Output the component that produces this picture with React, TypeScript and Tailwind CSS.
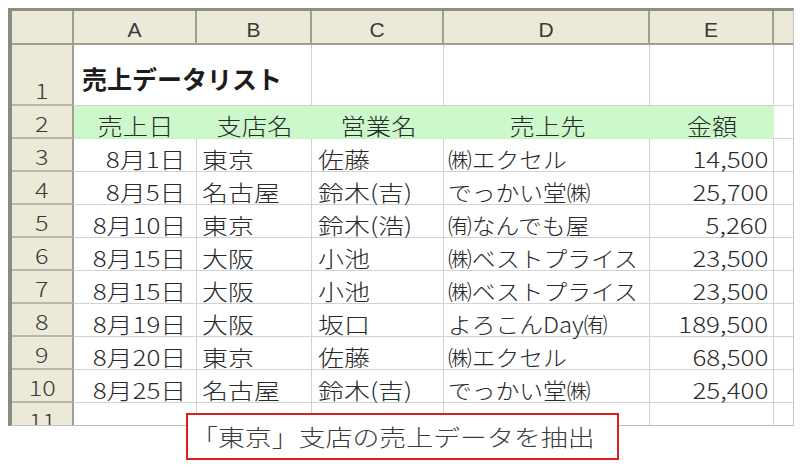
import React from 'react';

type Row = [string, string, string, string, string];

// 売上データ (行3〜10)
const rows: Row[] = [
  ['8月1日', '東京', '佐藤', '㈱エクセル', '14,500'],
  ['8月5日', '名古屋', '鈴木(吉)', 'でっかい堂㈱', '25,700'],
  ['8月10日', '東京', '鈴木(浩)', '㈲なんでも屋', '5,260'],
  ['8月15日', '大阪', '小池', '㈱ベストプライス', '23,500'],
  ['8月15日', '大阪', '小池', '㈱ベストプライス', '23,500'],
  ['8月19日', '大阪', '坂口', 'よろこんDay㈲', '189,500'],
  ['8月20日', '東京', '佐藤', '㈱エクセル', '68,500'],
  ['8月25日', '名古屋', '鈴木(吉)', 'でっかい堂㈱', '25,400'],
];

const grid = 'grid grid-cols-[62px_123px_115px_132px_206px_124px_19px]';
const line = 'border-r border-b border-[#d2d2d2]';
const cell = 'flex items-end whitespace-nowrap border-r border-b border-[#d2d2d2] pb-[2px] text-[22px] leading-none text-[#2a2a2a]';
const head = 'flex items-end justify-center pb-[3px] bg-[#ece9d8] border-r-2 border-b-2 border-[#a19e92]';

function RowNo({ n }: { n: number }) {
  return (
    <div className="flex items-end justify-center pb-[3px] bg-[#ece9d8] border-r-2 border-b-2 border-r-[#a19e92] border-b-[#b8b5a9] text-[21px] leading-none text-[#3a3a3a]">
      <span className="inline-block scale-x-[1.2]">{n}</span>
    </div>
  );
}

export default function App() {
  return (
    <div className="relative w-[800px] h-[472px] bg-white pt-[8px] pl-[8px] font-light font-['Noto_Sans_CJK_JP',sans-serif]">
      <div className="w-[786px] h-[418px] overflow-hidden border-l-4 border-t-[3px] border-r border-b border-l-[#8b8a83] border-t-[#8e8d86] border-r-[#c4c4c4] border-b-[#bdbdbd]">
        {/* 列見出し */}
        <div className={`${grid} h-[34px]`}>
          <div className={head} />
          {['A', 'B', 'C', 'D', 'E'].map((c) => (
            <div key={c} className={`${head} font-normal font-['Liberation_Sans',Arial,sans-serif] text-[21px] leading-none text-[#3a3a3a]`}>
              {c}
            </div>
          ))}
          <div className="bg-[#ece9d8] border-b-2 border-[#a19e92]" />
        </div>

        {/* 行1: タイトル */}
        <div className={`${grid} h-[61px]`}>
          <RowNo n={1} />
          <div className={`col-span-2 flex items-end pl-[8px] pb-[14px] ${line}`}>
            <span className="text-[25px] leading-none font-bold text-[#1c1c1c] whitespace-nowrap">売上データリスト</span>
          </div>
          <div className={line} />
          <div className={line} />
          <div className={line} />
          <div className="border-b border-[#d2d2d2]" />
        </div>

        {/* 行2: 見出し */}
        <div className={`${grid} h-[33px]`}>
          <RowNo n={2} />
          {['売上日', '支店名', '営業名', '売上先', '金額'].map((h) => (
            <div key={h} className="flex items-end justify-center pb-[1px] bg-[#ccf8cc] border-b border-[#c6f2c6] text-[23px] leading-none text-[#2a2a2a]">
              <span className="inline-block scale-x-[1.1] whitespace-nowrap">{h}</span>
            </div>
          ))}
          <div className="border-b border-[#d2d2d2]" />
        </div>

        {/* 行3〜10 */}
        {rows.map((r, i) => (
          <div key={i} className={`${grid} h-[33px]`}>
            <RowNo n={i + 3} />
            <div className={`${cell} justify-end pr-[10px]`}>
              <span className="inline-block origin-right scale-x-[1.18]">{r[0]}</span>
            </div>
            <div className={`${cell} pl-[5px]`}>
              <span className="inline-block origin-left scale-x-[1.18]">{r[1]}</span>
            </div>
            <div className={`${cell} pl-[6px]`}>
              <span className="inline-block origin-left scale-x-[1.18]">{r[2]}</span>
            </div>
            <div className={`${cell} pl-[4px]`}>
              <span className="inline-block origin-left scale-x-[1.08]">{r[3]}</span>
            </div>
            <div className={`${cell} justify-end pr-[5px]`}>
              <span className="inline-block origin-right scale-x-[1.18]">{r[4]}</span>
            </div>
            <div className="border-b border-[#d2d2d2]" />
          </div>
        ))}

        {/* 行11 (途中で切れる) */}
        <div className={`${grid} h-[33px]`}>
          <RowNo n={11} />
          <div className={line} />
          <div className={line} />
          <div className={line} />
          <div className={line} />
          <div className={line} />
          <div className="border-b border-[#d2d2d2]" />
        </div>
      </div>

      {/* 注釈 */}
      <div className="absolute left-[186px] top-[413px] w-[433px] h-[47px] flex items-center pl-[3px] bg-white border-2 border-[#dd1f1f]">
        <span className="inline-block origin-left scale-x-[1.17] text-[23px] leading-none text-[#3c3c3c] whitespace-nowrap">「東京」支店の売上データを抽出</span>
      </div>
    </div>
  );
}
